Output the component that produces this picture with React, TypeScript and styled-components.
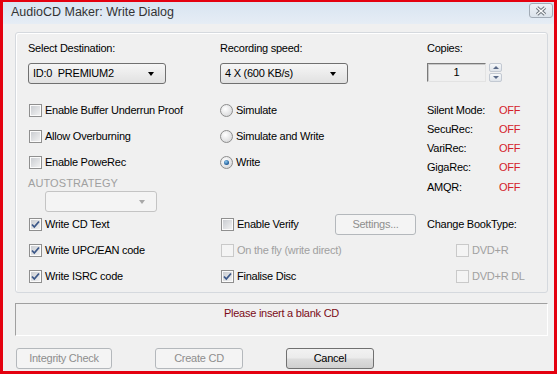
import styled, { createGlobalStyle } from "styled-components";

const GlobalStyle = createGlobalStyle`
  html, body {
    margin: 0;
    padding: 0;
    background: #fff;
  }
  body {
    font-family: "Liberation Sans", Arial, sans-serif;
  }
`;

const Window = styled.div`
  width: 557px;
  height: 374px;
  box-sizing: border-box;
  border-style: solid;
  border-color: #e4000f;
  border-width: 2px 3px 3px 3px;
  background: #f0f0f0;
  display: flex;
  flex-direction: column;
  overflow: hidden;
`;

const TitleBar = styled.div`
  height: 22px;
  display: flex;
  align-items: flex-start;
  justify-content: space-between;
  padding: 0 1px 0 8px;
  background: linear-gradient(#d8e4f1, #e6edf5);
`;

const Title = styled.span`
  font-size: 12.5px;
  line-height: 20px;
  color: #333;
`;

const CloseButton = styled.div`
  width: 24px;
  height: 15px;
  margin-top: 1px;
  box-sizing: border-box;
  border: 1px solid #a2abb6;
  border-radius: 3px;
  background: linear-gradient(#eef2f7, #dce3eb);
  display: flex;
  align-items: center;
  justify-content: center;
`;

const Client = styled.div`
  flex: 1;
  padding: 8px 6px 0 12px;
  display: flex;
  flex-direction: column;
  font-size: 11px;
  letter-spacing: -0.25px;
  color: #000;
`;

const GroupBox = styled.div`
  border: 1px solid #d5d9de;
  border-radius: 3px;
  box-shadow: inset 1px 1px 0 #fff;
  padding: 8px 0 4px 12px;
`;

const Section = styled.div<{ $mt?: number }>`
  display: grid;
  grid-template-columns: 192px 207px 1fr;
  margin-top: ${(p) => p.$mt ?? 0}px;
`;

const Column = styled.div<{ $gap?: number }>`
  display: flex;
  flex-direction: column;
  gap: ${(p) => p.$gap ?? 0}px;
`;

const FieldLabel = styled.div`
  height: 14px;
  line-height: 14px;
  margin-bottom: 8px;
`;

const Combo = styled.div<{ $w: number; $disabled?: boolean }>`
  position: relative;
  width: ${(p) => p.$w}px;
  height: 21px;
  box-sizing: border-box;
  border: 1px solid ${(p) => (p.$disabled ? "#c4c4c4" : "#707070")};
  border-radius: 3px;
  background: ${(p) =>
    p.$disabled ? "#f4f4f4" : "linear-gradient(#f6f6f6, #e1e1e1)"};
  padding-left: 4px;
  line-height: 19px;
  white-space: pre;

  &::after {
    content: "";
    position: absolute;
    right: 11px;
    top: 8px;
    border-left: 3.5px solid transparent;
    border-right: 3.5px solid transparent;
    border-top: 4px solid ${(p) => (p.$disabled ? "#a8a8a8" : "#000")};
  }
`;

const Spinner = styled.div`
  display: flex;
  gap: 3px;
`;

const SpinText = styled.div`
  width: 59px;
  height: 19px;
  box-sizing: border-box;
  border: 1px solid;
  border-color: #7a7a7a #e3e3e3 #e3e3e3 #7a7a7a;
  box-shadow: inset 1px 1px 0 #c8c8c8;
  text-align: center;
  line-height: 17px;
`;

const SpinButtons = styled.div`
  display: flex;
  flex-direction: column;
  gap: 1px;
`;

const SpinButton = styled.div<{ $up?: boolean }>`
  width: 13px;
  height: 9px;
  box-sizing: border-box;
  border: 1px solid #c3c9d2;
  border-radius: 2px;
  background: linear-gradient(#f6f8fa, #dfe4ea);
  display: flex;
  align-items: center;
  justify-content: center;

  &::after {
    content: "";
    border-left: 3px solid transparent;
    border-right: 3px solid transparent;
    ${(p) =>
      p.$up ? "border-bottom: 3px solid #5a6a88;" : "border-top: 3px solid #5a6a88;"}
  }
`;

const Row = styled.div<{ $h?: number; $pl?: number }>`
  height: ${(p) => p.$h ?? 26}px;
  display: flex;
  align-items: center;
  padding-left: ${(p) => p.$pl ?? 0}px;
`;

const Label = styled.span<{ $disabled?: boolean }>`
  margin-left: 3px;
  color: ${(p) => (p.$disabled ? "#a0a0a0" : "#000")};
  white-space: nowrap;
`;

const Box = styled.span<{ $disabled?: boolean }>`
  width: 13px;
  height: 13px;
  margin-left: 1px;
  box-sizing: border-box;
  border: 1px solid ${(p) => (p.$disabled ? "#c9c9c9" : "#8f8f8f")};
  box-shadow: inset 0 0 0 1px ${(p) => (p.$disabled ? "#f4f4f4" : "#fbfbfb")};
  background: ${(p) =>
    p.$disabled ? "#f4f4f4" : "linear-gradient(135deg, #c6c9ce, #f5f5f5)"};
  display: flex;
  flex-shrink: 0;
`;

const Radio = styled.span<{ $checked?: boolean }>`
  width: 13px;
  height: 13px;
  box-sizing: border-box;
  border-radius: 50%;
  border: 1px solid #8d8d8d;
  background: radial-gradient(circle at 40% 35%, #fff, #cfd0d2);
  display: flex;
  align-items: center;
  justify-content: center;
  flex-shrink: 0;

  &::after {
    content: "";
    display: ${(p) => (p.$checked ? "block" : "none")};
    width: 5px;
    height: 5px;
    border-radius: 50%;
    background: radial-gradient(circle at 40% 35%, #8cc8f0, #14508e 75%);
  }
`;

const SubLabel = styled.div`
  height: 16px;
  line-height: 16px;
  color: #a0a0a0;
  letter-spacing: 0.1px;
`;

const Indent = styled.div`
  padding-left: 17px;
`;

const StatusList = styled.div`
  margin-top: 3px;
`;

const StatusRow = styled.div`
  height: 19.25px;
  display: grid;
  grid-template-columns: 72px auto;
  align-items: center;
`;

const Off = styled.span`
  color: #d4202a;
`;

const Button = styled.div<{ $w: number; $disabled?: boolean }>`
  width: ${(p) => p.$w}px;
  height: 21px;
  box-sizing: border-box;
  border: 1px solid ${(p) => (p.$disabled ? "#b4b8bc" : "#707070")};
  border-radius: 3px;
  background: ${(p) =>
    p.$disabled
      ? "#f4f4f4"
      : "linear-gradient(#f2f2f2 0%, #ebebeb 48%, #dddddd 52%, #cfcfcf 100%)"};
  color: ${(p) => (p.$disabled ? "#8e8e8e" : "#000")};
  text-align: center;
  line-height: 19px;
`;

const SettingsButton = styled(Button)`
  margin-left: auto;
  margin-right: 11px;
`;

const StatusBox = styled.div`
  margin-top: 10px;
  height: 33px;
  box-sizing: border-box;
  border: 1px solid;
  border-color: #a0a0a0 #fff #fff #a0a0a0;
  color: #7b0c17;
  text-align: center;
  padding-top: 2px;
  line-height: 14px;
`;

const ButtonRow = styled.div`
  margin-top: 12px;
  padding-left: 1px;
  display: flex;
  gap: 43px;
`;

function CheckBox({ checked, disabled }: { checked?: boolean; disabled?: boolean }) {
  return (
    <Box $disabled={disabled}>
      {checked && (
        <svg width="11" height="11" viewBox="0 0 11 11">
          <path
            d="M2 5.5 L4.3 8 L9 2.5"
            fill="none"
            stroke="#3b5788"
            strokeWidth="1.8"
          />
        </svg>
      )}
    </Box>
  );
}

function CheckItem({
  text,
  checked,
  disabled,
  h,
  pl,
}: {
  text: string;
  checked?: boolean;
  disabled?: boolean;
  h?: number;
  pl?: number;
}) {
  return (
    <Row $h={h} $pl={pl}>
      <CheckBox checked={checked} disabled={disabled} />
      <Label $disabled={disabled}>{text}</Label>
    </Row>
  );
}

function RadioItem({ text, checked }: { text: string; checked?: boolean }) {
  return (
    <Row>
      <Radio $checked={checked} />
      <Label>{text}</Label>
    </Row>
  );
}

const statuses = ["Silent Mode:", "SecuRec:", "VariRec:", "GigaRec:", "AMQR:"];

export default function App() {
  return (
    <>
      <GlobalStyle />
      <Window>
        <TitleBar>
          <Title>AudioCD Maker: Write Dialog</Title>
          <CloseButton>
            <svg width="14" height="10" viewBox="0 0 14 10">
              <path d="M3 1.5 L11 8.5 M11 1.5 L3 8.5" stroke="#6d747c" strokeWidth="3.4" />
              <path d="M3 1.5 L11 8.5 M11 1.5 L3 8.5" stroke="#fbfcfd" strokeWidth="1.4" />
            </svg>
          </CloseButton>
        </TitleBar>

        <Client>
          <GroupBox>
            <Section>
              <Column>
                <FieldLabel>Select Destination:</FieldLabel>
                <Combo $w={138}>{"ID:0  PREMIUM2"}</Combo>
              </Column>
              <Column>
                <FieldLabel>Recording speed:</FieldLabel>
                <Combo $w={128}>4 X (600 KB/s)</Combo>
              </Column>
              <Column>
                <FieldLabel>Copies:</FieldLabel>
                <Spinner>
                  <SpinText>1</SpinText>
                  <SpinButtons>
                    <SpinButton $up />
                    <SpinButton />
                  </SpinButtons>
                </Spinner>
              </Column>
            </Section>

            <Section $mt={13}>
              <Column>
                <CheckItem text="Enable Buffer Underrun Proof" />
                <CheckItem text="Allow Overburning" />
                <CheckItem text="Enable PoweRec" />
                <SubLabel>AUTOSTRATEGY</SubLabel>
                <Indent>
                  <Combo $w={112} $disabled />
                </Indent>
              </Column>
              <Column>
                <RadioItem text="Simulate" />
                <RadioItem text="Simulate and Write" />
                <RadioItem text="Write" checked />
              </Column>
              <StatusList>
                {statuses.map((s) => (
                  <StatusRow key={s}>
                    <span>{s}</span>
                    <Off>OFF</Off>
                  </StatusRow>
                ))}
              </StatusList>
            </Section>

            <Section>
              <Column $gap={2}>
                <CheckItem h={24} text="Write CD Text" checked />
                <CheckItem h={24} text="Write UPC/EAN code" checked />
                <CheckItem h={24} text="Write ISRC code" checked />
              </Column>
              <Column $gap={2}>
                <Row $h={24}>
                  <CheckBox />
                  <Label>Enable Verify</Label>
                  <SettingsButton $w={81} $disabled>
                    Settings...
                  </SettingsButton>
                </Row>
                <CheckItem h={24} text="On the fly (write direct)" disabled />
                <CheckItem h={24} text="Finalise Disc" checked />
              </Column>
              <Column $gap={2}>
                <Row $h={24}>Change BookType:</Row>
                <CheckItem h={24} pl={28} text="DVD+R" disabled />
                <CheckItem h={24} pl={28} text="DVD+R DL" disabled />
              </Column>
            </Section>
          </GroupBox>

          <StatusBox>Please insert a blank CD</StatusBox>

          <ButtonRow>
            <Button $w={96} $disabled>
              Integrity Check
            </Button>
            <Button $w={88} $disabled>
              Create CD
            </Button>
            <Button $w={88}>Cancel</Button>
          </ButtonRow>
        </Client>
      </Window>
    </>
  );
}
